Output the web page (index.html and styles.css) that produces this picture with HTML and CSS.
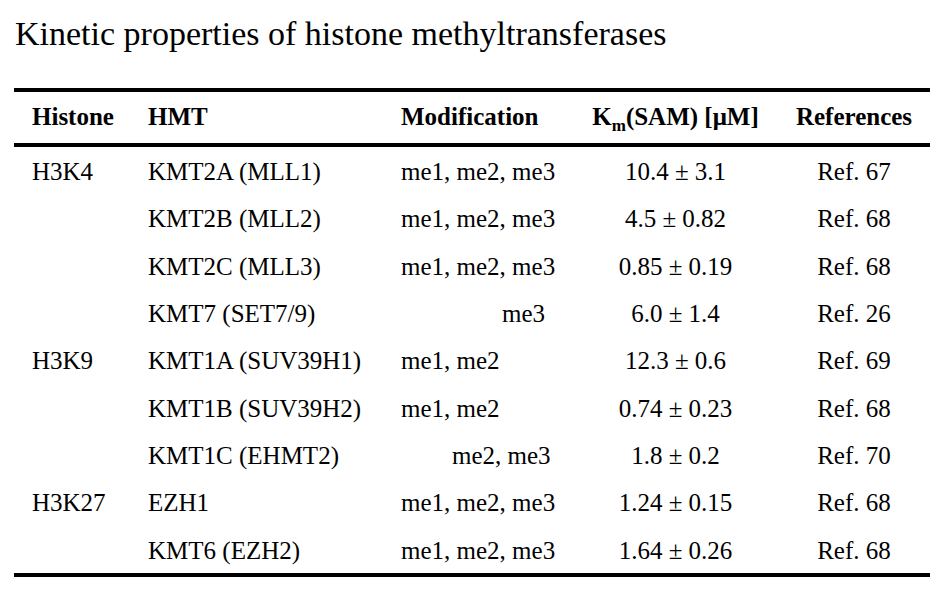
FILE: index.html
```html
<!DOCTYPE html>
<html lang="en">
<head>
<meta charset="utf-8">
<title>Kinetic properties of histone methyltransferases</title>
<link rel="stylesheet" href="styles.css">
</head>
<body>
<main class="page">
  <h1 class="title">Kinetic properties of histone methyltransferases</h1>
  <table class="kin">
    <colgroup>
      <col class="c-histone">
      <col class="c-hmt">
      <col class="c-mod">
      <col class="c-km">
      <col class="c-ref">
    </colgroup>
    <thead>
      <tr>
        <th class="left">Histone</th>
        <th class="left">HMT</th>
        <th class="left">Modification</th>
        <th class="center">K<sub>m</sub>(SAM) [μM]</th>
        <th class="center">References</th>
      </tr>
    </thead>
    <tbody>
      <tr>
        <td>H3K4</td><td>KMT2A (MLL1)</td><td>me1, me2, me3</td><td class="center">10.4 ± 3.1</td><td class="center">Ref. 67</td>
      </tr>
      <tr>
        <td></td><td>KMT2B (MLL2)</td><td>me1, me2, me3</td><td class="center">4.5 ± 0.82</td><td class="center">Ref. 68</td>
      </tr>
      <tr>
        <td></td><td>KMT2C (MLL3)</td><td>me1, me2, me3</td><td class="center">0.85 ± 0.19</td><td class="center">Ref. 68</td>
      </tr>
      <tr>
        <td></td><td>KMT7 (SET7/9)</td><td class="mod-far">me3</td><td class="center">6.0 ± 1.4</td><td class="center">Ref. 26</td>
      </tr>
      <tr>
        <td>H3K9</td><td>KMT1A (SUV39H1)</td><td>me1, me2</td><td class="center">12.3 ± 0.6</td><td class="center">Ref. 69</td>
      </tr>
      <tr>
        <td></td><td>KMT1B (SUV39H2)</td><td>me1, me2</td><td class="center">0.74 ± 0.23</td><td class="center">Ref. 68</td>
      </tr>
      <tr>
        <td></td><td>KMT1C (EHMT2)</td><td class="mod-mid">me2, me3</td><td class="center">1.8 ± 0.2</td><td class="center">Ref. 70</td>
      </tr>
      <tr>
        <td>H3K27</td><td>EZH1</td><td>me1, me2, me3</td><td class="center">1.24 ± 0.15</td><td class="center">Ref. 68</td>
      </tr>
      <tr>
        <td></td><td>KMT6 (EZH2)</td><td>me1, me2, me3</td><td class="center">1.64 ± 0.26</td><td class="center">Ref. 68</td>
      </tr>
    </tbody>
  </table>
</main>
</body>
</html>
```
FILE: styles.css
```css
html, body {
  margin: 0;
  padding: 0;
  background: #ffffff;
}

body {
  font-family: "Liberation Serif", Tinos, "Times New Roman", Times, serif;
  color: #000000;
}

.page {
  padding: 13px 16px 0 14px;
}

.title {
  margin: 0 0 34px 1px;
  font-size: 34px;
  font-weight: normal;
  line-height: 41px;
}

.kin {
  width: 916px;
  table-layout: fixed;
  border-collapse: separate;
  border-spacing: 0;
  border-top: 4px solid #000;
  border-bottom: 4px solid #000;
  font-size: 25px;
}

.c-histone { width: 116px; }
.c-hmt { width: 253px; }
.c-mod { width: 190px; }
.c-km { width: 205px; }
.c-ref { width: 152px; }

.kin th {
  font-weight: bold;
  line-height: 49px;
  padding: 0 0 2px 0;
  border-bottom: 4px solid #000;
  vertical-align: top;
  white-space: nowrap;
}

.kin td {
  line-height: 45.33px;
  padding: 2px 0 0 0;
  vertical-align: top;
  white-space: nowrap;
}

.kin th.left,
.kin td {
  text-align: left;
  padding-left: 18px;
}

.kin th.center,
.kin td.center {
  text-align: center;
  padding-left: 0;
}

.kin td.mod-mid {
  padding-left: 69px;
}

.kin td.mod-far {
  padding-left: 119px;
}

.kin sub {
  font-size: 17px;
  line-height: 0;
  vertical-align: -6px;
}
```
